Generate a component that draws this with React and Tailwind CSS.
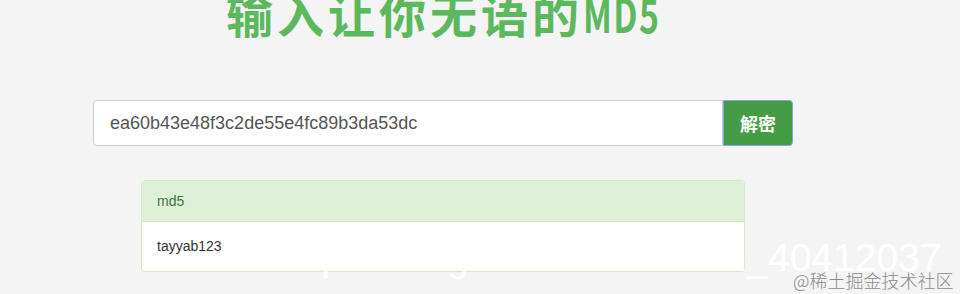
export default function App() {
  return (
    <div className="relative h-[294px] w-[960px] overflow-hidden bg-[#f4f4f4] font-['Liberation_Sans',Arial,sans-serif]">
      <div className="ml-[93px] w-[700px]">
        <h1 className="-mt-[17px] flex h-[60px] items-center whitespace-nowrap pl-[133px] font-['Noto_Sans_CJK_SC',sans-serif] text-[47px] font-semibold leading-[60px] tracking-[4px] text-[#5cb85c]">
          <span>输入让你无语的</span>
          <span className="inline-block origin-left scale-x-[0.72] tracking-[2px]">MD5</span>
        </h1>

        <div className="mt-[57px] flex h-[46px]">
          <div className="flex flex-1 items-center rounded-l border border-[#ccc] bg-white px-4 text-[18px] text-[#555]">
            ea60b43e48f3c2de55e4fc89b3da53dc
          </div>
          <button className="w-[70px] rounded-r border border-[#7fa8dc] bg-[#449d44] font-['Noto_Sans_CJK_SC',sans-serif] text-[18px] font-bold text-white">
            解密
          </button>
        </div>
      </div>

      <div className="ml-[141px] mt-[34px] w-[604px] rounded border border-[#d6e9c6] bg-white text-[14px]">
        <div className="flex h-[41px] items-center rounded-t border-b border-[#d6e9c6] bg-[#dff0d8] px-[15px] text-[#3c763d]">
          md5
        </div>
        <div className="flex h-[49px] items-center px-[15px] text-[#333]">tayyab123</div>
      </div>

      <div className="pointer-events-none absolute left-[278px] top-[236px] whitespace-nowrap text-[39px] font-light leading-[44px] text-white">
        https://blog.csdn.net/weixin_40412037
      </div>
      <div className="absolute left-[793px] top-[268px] whitespace-nowrap font-['Noto_Sans_CJK_SC',sans-serif] text-[18px] font-light leading-[24px] text-[#8a8a8a]">
        @稀土掘金技术社区
      </div>
    </div>
  );
}
